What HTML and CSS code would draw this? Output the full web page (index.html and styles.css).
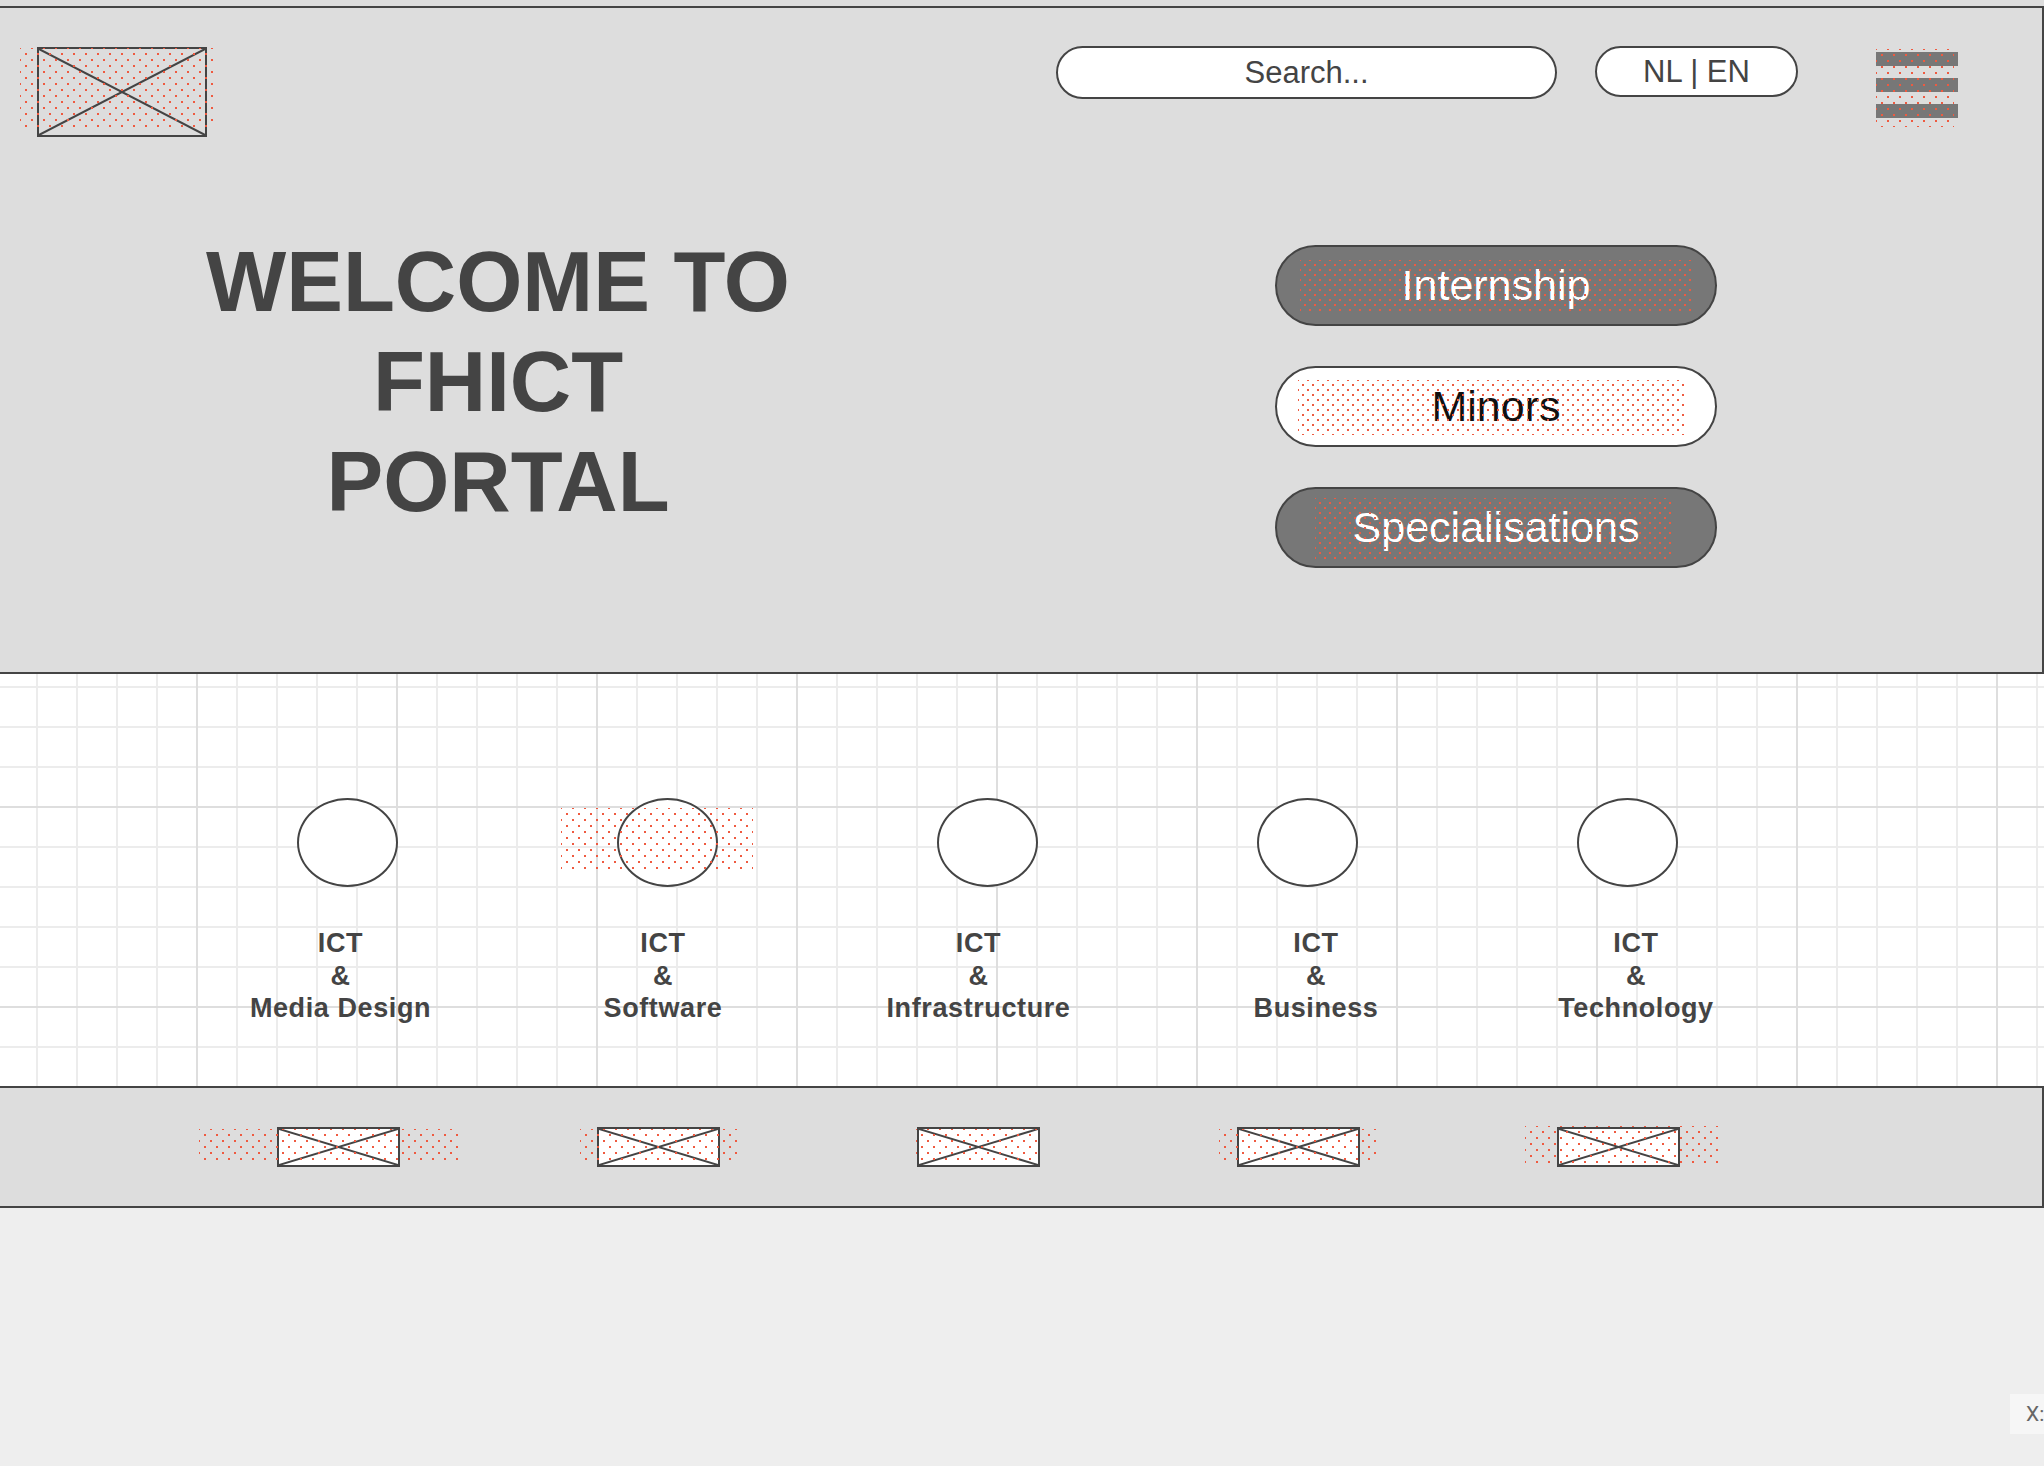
FILE: index.html
```html
<!DOCTYPE html>
<html lang="en">
<head>
<meta charset="utf-8">
<title>FHICT Portal</title>
<link rel="stylesheet" href="styles.css">
</head>
<body>
<div class="canvas">
  <div class="topstrip"></div>
  <header class="hero">
    <div class="topbar">
      <div class="logo">
        <div class="ph ph--logo">
          <svg class="xmark" viewBox="0 0 100 100" preserveAspectRatio="none"><line x1="0" y1="0" x2="100" y2="100"/><line x1="100" y1="0" x2="0" y2="100"/></svg>
        </div>
        <span class="dots dots--logo"></span>
      </div>
      <div class="search">Search...</div>
      <div class="lang">NL | EN</div>
      <div class="menu">
        <span class="bar"></span>
        <span class="bar"></span>
        <span class="bar"></span>
        <span class="dots dots--menu"></span>
      </div>
    </div>
    <div class="main">
      <h1 class="title">WELCOME TO<br>FHICT<br>PORTAL</h1>
      <nav class="actions">
        <div class="pill pill--dark">Internship<span class="dots dots--p1"></span></div>
        <div class="pill pill--light">Minors<span class="dots dots--p2"></span></div>
        <div class="pill pill--dark">Specialisations<span class="dots dots--p3"></span></div>
      </nav>
    </div>
  </header>

  <section class="tracks">
    <div class="track">
      <div class="oval"></div>
      <div class="label label--m1">ICT<br>&amp;<br>Media Design</div>
    </div>
    <div class="track">
      <div class="oval"><span class="dots dots--oval"></span></div>
      <div class="label label--m2">ICT<br>&amp;<br>Software</div>
    </div>
    <div class="track">
      <div class="oval"></div>
      <div class="label label--m3">ICT<br>&amp;<br>Infrastructure</div>
    </div>
    <div class="track">
      <div class="oval"></div>
      <div class="label label--p">ICT<br>&amp;<br>Business</div>
    </div>
    <div class="track">
      <div class="oval"></div>
      <div class="label label--p">ICT<br>&amp;<br>Technology</div>
    </div>
  </section>

  <footer class="partners">
    <div class="slot">
      <div class="ph ph--foot"><svg class="xmark" viewBox="0 0 100 100" preserveAspectRatio="none"><line x1="0" y1="0" x2="100" y2="100"/><line x1="100" y1="0" x2="0" y2="100"/></svg></div>
      <span class="dots dots--f1"></span>
    </div>
    <div class="slot">
      <div class="ph ph--foot"><svg class="xmark" viewBox="0 0 100 100" preserveAspectRatio="none"><line x1="0" y1="0" x2="100" y2="100"/><line x1="100" y1="0" x2="0" y2="100"/></svg></div>
      <span class="dots dots--f2"></span>
    </div>
    <div class="slot">
      <div class="ph ph--foot"><svg class="xmark" viewBox="0 0 100 100" preserveAspectRatio="none"><line x1="0" y1="0" x2="100" y2="100"/><line x1="100" y1="0" x2="0" y2="100"/></svg></div>
      <span class="dots dots--f3"></span>
    </div>
    <div class="slot">
      <div class="ph ph--foot"><svg class="xmark" viewBox="0 0 100 100" preserveAspectRatio="none"><line x1="0" y1="0" x2="100" y2="100"/><line x1="100" y1="0" x2="0" y2="100"/></svg></div>
      <span class="dots dots--f4"></span>
    </div>
    <div class="slot">
      <div class="ph ph--foot"><svg class="xmark" viewBox="0 0 100 100" preserveAspectRatio="none"><line x1="0" y1="0" x2="100" y2="100"/><line x1="100" y1="0" x2="0" y2="100"/></svg></div>
      <span class="dots dots--f5"></span>
    </div>
  </footer>
</div>
<div class="coords">X:</div>
</body>
</html>
```

FILE: styles.css
```css
html, body {
  margin: 0;
  padding: 0;
  overflow: hidden;
}
body {
  background: #eeeeee;
  font-family: "Liberation Sans", Arial, sans-serif;
  color: #444444;
  width: 2044px;
  height: 1466px;
}

.canvas {
  width: 2044px;
  height: 1208px;
  display: flex;
  flex-direction: column;
  background-color: #ffffff;
  background-image:
    linear-gradient(to right, #dedede 0 2px, transparent 2px),
    linear-gradient(to bottom, #dedede 0 2px, transparent 2px),
    linear-gradient(to right, #ececec 0 2px, transparent 2px),
    linear-gradient(to bottom, #ececec 0 2px, transparent 2px);
  background-size: 200px 200px, 200px 200px, 40px 40px, 40px 40px;
  background-position: 196px 6px, 196px 6px, 196px 6px, 196px 6px;
}

.topstrip {
  height: 6px;
  background: #dddddd;
}

/* ---------- header ---------- */
.hero {
  box-sizing: border-box;
  height: 668px;
  background: #dddddd;
  border-top: 2px solid #444444;
  border-right: 2px solid #444444;
  border-bottom: 2px solid #444444;
  display: flex;
  flex-direction: column;
}

.topbar {
  display: flex;
  align-items: flex-start;
  padding-top: 38px;
  padding-right: 84px;
}

.logo {
  position: relative;
  margin-left: 37px;
  margin-top: 1px;
}

.ph {
  box-sizing: border-box;
  border: 2px solid #444444;
}
.ph--logo {
  width: 170px;
  height: 90px;
}
.xmark {
  display: block;
  width: 100%;
  height: 100%;
}
.xmark line {
  stroke: #444444;
  stroke-width: 2;
  vector-effect: non-scaling-stroke;
}

.search {
  box-sizing: border-box;
  margin-left: auto;
  width: 501px;
  height: 53px;
  border: 2px solid #444444;
  border-radius: 27px;
  background: #ffffff;
  font-size: 31px;
  line-height: 50px;
  text-align: center;
  color: #444444;
}

.lang {
  box-sizing: border-box;
  margin-left: 38px;
  width: 203px;
  height: 51px;
  border: 2px solid #444444;
  border-radius: 26px;
  background: #ffffff;
  font-size: 31px;
  line-height: 47px;
  text-align: center;
  color: #444444;
}

.menu {
  position: relative;
  margin-left: 78px;
  margin-top: 6px;
  width: 82px;
  display: flex;
  flex-direction: column;
  gap: 12px;
}
.bar {
  display: block;
  height: 14px;
  background: #777777;
}

.main {
  display: flex;
  align-items: flex-start;
  margin-top: 95px;
}

.title {
  margin: 0 0 0 148px;
  width: 700px;
  font-size: 85px;
  line-height: 100px;
  font-weight: bold;
  text-align: center;
  color: #444444;
}

.actions {
  margin-left: auto;
  margin-right: 325px;
  margin-top: 13px;
  width: 442px;
  display: flex;
  flex-direction: column;
  gap: 40px;
}

.pill {
  position: relative;
  box-sizing: border-box;
  height: 81px;
  border: 2px solid #444444;
  border-radius: 41px;
  font-size: 43px;
  line-height: 77px;
  text-align: center;
}
.pill--dark {
  background: #777777;
  color: #ffffff;
}
.pill--light {
  background: #ffffff;
  color: #111111;
}

/* ---------- hatch dots ---------- */
.dots {
  position: absolute;
  display: block;
  pointer-events: none;
  background-image:
    radial-gradient(circle, #ef5a40 0 1px, transparent 1.3px),
    radial-gradient(circle, #ef5a40 0 1px, transparent 1.3px);
  background-size: 12px 12px;
  background-position: 0 0, 6px 6px;
}
.dots--logo { left: -17px; top: 1px; width: 197px; height: 80px; }
.dots--menu { left: 0; top: -3px; width: 78px; height: 78px; }

.dots--p1, .dots--p2, .dots--p3 {
  background-size: 10px 10px;
  background-position: 0 0, 5px 5px;
  background-image:
    radial-gradient(circle, #ef5a40 0 0.8px, transparent 1.1px),
    radial-gradient(circle, #ef5a40 0 0.8px, transparent 1.1px);
}
.dots--p1 { left: 23px; right: 22px; top: 13px; bottom: 10px; }
.dots--p2 { left: 21px; right: 30px; top: 12px; bottom: 10px; }
.dots--p3 { left: 38px; right: 42px; top: 9px; bottom: 7px; }

.dots--oval { left: -58px; top: 8px; width: 192px; height: 63px; }

.dots--f1 { left: -77px; top: 2px; width: 261px; height: 35px; }
.dots--f2 { left: -16px; top: 2px; width: 158px; height: 35px; }
.dots--f3 { left: 0; top: 2px; width: 123px; height: 35px; }
.dots--f4 { left: -17px; top: 2px; width: 160px; height: 35px; }
.dots--f5 { left: -31px; top: -1px; width: 196px; height: 38px; }

/* ---------- tracks ---------- */
.tracks {
  height: 412px;
  box-sizing: border-box;
  padding-top: 124px;
  padding-left: 187px;
  display: flex;
  align-items: flex-start;
}
.track {
  width: 320px;
  display: flex;
  flex-direction: column;
  align-items: center;
}
.oval {
  position: relative;
  box-sizing: border-box;
  width: 101px;
  height: 89px;
  border: 2px solid #444444;
  border-radius: 50%;
  background: #ffffff;
}
.label {
  margin-top: 40px;
  font-size: 27px;
  line-height: 32.5px;
  font-weight: bold;
  letter-spacing: 0.6px;
  text-align: center;
  color: #444444;
}
.label--m1 { margin-right: 13px; }
.label--m2 { margin-right: 8px; }
.label--m3 { margin-right: 17px; }
.label--p { margin-left: 18px; }

/* ---------- footer ---------- */
.partners {
  box-sizing: border-box;
  height: 122px;
  background: #dddddd;
  border-top: 2px solid #444444;
  border-right: 2px solid #444444;
  border-bottom: 2px solid #444444;
  display: flex;
  align-items: center;
  padding-left: 178px;
}
.slot {
  position: relative;
  width: 320px;
  display: flex;
  justify-content: center;
}
.slot .dots {
  margin-left: 98px;
}
.ph--foot {
  width: 123px;
  height: 40px;
  background: #ffffff;
}

.coords {
  position: fixed;
  left: 2010px;
  top: 1394px;
  height: 40px;
  padding: 0 16px;
  background: #f6f6f6;
  color: #666666;
  font-family: Roboto, "Liberation Sans", sans-serif;
  font-size: 21px;
  line-height: 40px;
  white-space: nowrap;
}
```
